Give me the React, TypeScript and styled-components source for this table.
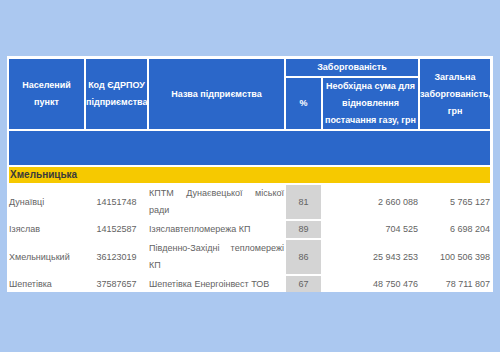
import React from 'react'
import styled, { createGlobalStyle } from 'styled-components'

const GlobalStyle = createGlobalStyle`
  html, body {
    margin: 0;
    padding: 0;
    background: #abc8f0;
    font-family: "Liberation Sans", Arial, sans-serif;
  }
`

type Row = {
  town: string
  code: string
  name: string
  percent: string
  needed: string
  total: string
}

const rows: Row[] = [
  { town: 'Дунаївці', code: '14151748', name: 'КПТМ Дунаєвецької міської ради', percent: '81', needed: '2 660 088', total: '5 765 127' },
  { town: 'Ізяслав', code: '14152587', name: 'Ізяславтепломережа КП', percent: '89', needed: '704 525', total: '6 698 204' },
  { town: 'Хмельницький', code: '36123019', name: 'Південно-Західні тепломережі КП', percent: '86', needed: '25 943 253', total: '100 506 398' },
  { town: 'Шепетівка', code: '37587657', name: 'Шепетівка Енергоінвест ТОВ', percent: '67', needed: '48 750 476', total: '78 711 807' },
]

export default function App() {
  return (
    <>
      <GlobalStyle />
      <Panel>
        <Table>
          <colgroup>
            <col style={{ width: 75 }} />
            <col style={{ width: 61 }} />
            <col style={{ width: 135 }} />
            <col style={{ width: 35 }} />
            <col style={{ width: 95 }} />
            <col style={{ width: 70 }} />
          </colgroup>
          <thead>
            <tr>
              <HeadCell rowSpan={2}>Населений<br />пункт</HeadCell>
              <HeadCell rowSpan={2} $clip>Код ЄДРПОУ<br />підприємства</HeadCell>
              <HeadCell rowSpan={2}>Назва підприємства</HeadCell>
              <HeadCell colSpan={2} $short>Заборгованість</HeadCell>
              <HeadCell rowSpan={2} $clip>Загальна<br />заборгованість,<br />грн</HeadCell>
            </tr>
            <tr>
              <HeadCell>%</HeadCell>
              <HeadCell>Необхідна сума для<br />відновлення<br />постачання газу, грн</HeadCell>
            </tr>
            <tr>
              <SpacerCell colSpan={6} />
            </tr>
          </thead>
          <tbody>
            <tr>
              <RegionCell colSpan={6}>Хмельницька</RegionCell>
            </tr>
            {rows.map((r) => (
              <tr key={r.code}>
                <Cell $align="left">{r.town}</Cell>
                <Cell $align="center">{r.code}</Cell>
                <NameCell>{r.name}</NameCell>
                <PercentCell>{r.percent}</PercentCell>
                <Cell $align="right">{r.needed}</Cell>
                <Cell $align="right">{r.total}</Cell>
              </tr>
            ))}
          </tbody>
        </Table>
      </Panel>
    </>
  )
}

const Panel = styled.div`
  margin: 56px 0 0 7px;
  width: 486px;
  height: 236px;
  padding-top: 1px;
  box-sizing: border-box;
  background: #ffffff;
  overflow: hidden;
`

const Table = styled.table`
  table-layout: fixed;
  width: 485px;
  border-collapse: separate;
  border-spacing: 2px;
`

const HeadCell = styled.th<{ $clip?: boolean; $short?: boolean }>`
  background: #2b67c9;
  color: #ffffff;
  font-size: 9px;
  font-weight: 700;
  line-height: 17px;
  text-align: center;
  vertical-align: middle;
  padding: 0;
  height: ${(p) => (p.$short ? '17px' : 'auto')};
  white-space: nowrap;
  overflow: ${(p) => (p.$clip ? 'hidden' : 'visible')};
`

const SpacerCell = styled.td`
  background: #2b67c9;
  height: 34px;
  padding: 0;
`

const RegionCell = styled.td`
  background: #f6c900;
  color: #3a3a3a;
  font-size: 10px;
  font-weight: 700;
  line-height: 16px;
  height: 16px;
  padding: 0 0 0 1px;
  text-align: left;
`

const Cell = styled.td<{ $align: 'left' | 'center' | 'right' }>`
  color: #636363;
  font-size: 9px;
  line-height: 17px;
  padding: 0;
  text-align: ${(p) => p.$align};
  vertical-align: middle;
  white-space: nowrap;
`

const NameCell = styled.td`
  color: #636363;
  font-size: 9px;
  line-height: 17px;
  padding: 0;
  text-align: justify;
  vertical-align: middle;
`

const PercentCell = styled.td`
  background: #d4d4d4;
  color: #636363;
  font-size: 9px;
  line-height: 17px;
  padding: 0;
  text-align: center;
  vertical-align: middle;
`
